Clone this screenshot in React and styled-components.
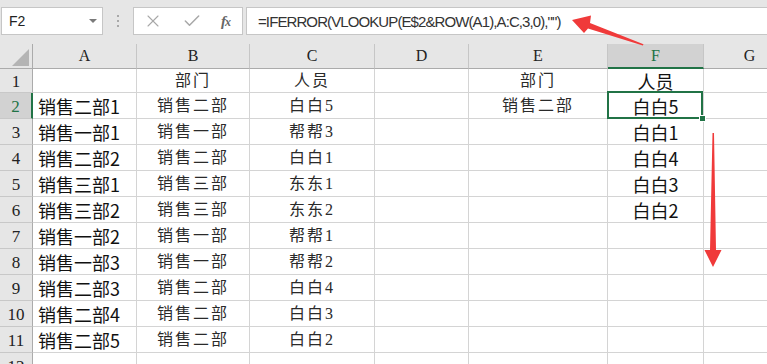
import React from 'react';
import styled, { createGlobalStyle } from 'styled-components';
import { X, Check } from 'lucide-react';

const Global = createGlobalStyle`
  html, body { margin: 0; padding: 0; background: #fff; overflow: hidden; }
  #root { width: 767px; height: 364px; }
`;

const Page = styled.div`
  position: relative;
  width: 767px;
  height: 364px;
  overflow: hidden;
  background: #fff;
  font-family: "Liberation Sans", "Noto Sans CJK SC", sans-serif;
`;

const Toolbar = styled.div`
  display: flex;
  align-items: flex-start;
  height: 44px;
  box-sizing: border-box;
  padding: 7px 0 0 1px;
  background: #e6e6e6;
`;

const Box = styled.div`
  box-sizing: border-box;
  height: 28px;
  background: #fff;
  border: 1px solid #c6c6c6;
  display: flex;
  align-items: center;
`;

const NameBox = styled(Box)`
  width: 102px;
  justify-content: space-between;
  padding: 0 5px 0 7px;
  font: 14px "Liberation Sans", sans-serif;
  color: #222;
`;

const Caret = styled.span`
  width: 0;
  height: 0;
  border-left: 4px solid transparent;
  border-right: 4px solid transparent;
  border-top: 4px solid #7a7a7a;
`;

const Grip = styled.div`
  width: 30px;
  height: 28px;
  display: flex;
  flex-direction: column;
  align-items: center;
  justify-content: center;
  gap: 3px;
`;

const Dot = styled.span`
  width: 2px;
  height: 2px;
  background: #a8a8a8;
`;

const ButtonBox = styled(Box)`
  width: 110px;
  justify-content: space-between;
  padding: 0 12px 0 9px;
  color: #a8a8a8;
`;

const Fx = styled.span`
  font: italic bold 15px "Liberation Serif", serif;
  color: #666;
  letter-spacing: -1px;
  & small { font-size: 12px; }
`;

const FormulaBox = styled(Box)`
  flex: 1;
  margin-left: 3px;
  border-right: none;
  padding-left: 11px;
  font: 15px "Liberation Sans", sans-serif;
  letter-spacing: -0.9px;
  color: #333;
  white-space: nowrap;
`;

const Sheet = styled.div`
  display: grid;
  grid-template-columns: 33px 104px 113px 125px 94px 139px 96px 92px;
  grid-template-rows: 25px 24px repeat(11, 26px);
`;

const Corner = styled.div`
  box-sizing: border-box;
  background: #e6e6e6;
  border-right: 1px solid #ababab;
  border-bottom: 1px solid #ababab;
  display: flex;
  align-items: flex-end;
  justify-content: flex-end;
  padding: 0 3px 2px 0;
`;

const Triangle = styled.span`
  width: 0;
  height: 0;
  border-left: 17px solid transparent;
  border-bottom: 17px solid #b4b4b4;
`;

const ColHead = styled.div`
  box-sizing: border-box;
  background: ${p => (p.$active ? '#d2d2d2' : '#e6e6e6')};
  border-right: 1px solid #c6c6c6;
  border-bottom: ${p => (p.$active ? '2px solid #217346' : '1px solid #ababab')};
  display: flex;
  align-items: center;
  justify-content: center;
  padding-top: ${p => (p.$active ? '1px' : '0')};
  font: 16px "Liberation Serif", serif;
  color: ${p => (p.$active ? '#217346' : '#222')};
`;

const RowHead = styled.div`
  box-sizing: border-box;
  background: ${p => (p.$active ? '#d2d2d2' : '#e6e6e6')};
  border-right: ${p => (p.$active ? '2px solid #217346' : '1px solid #ababab')};
  border-bottom: 1px solid #c8c8c8;
  display: flex;
  align-items: center;
  justify-content: center;
  padding-top: 2px;
  font: 17px "Liberation Serif", serif;
  color: ${p => (p.$active ? '#217346' : '#222')};
`;

const Cell = styled.div`
  position: relative;
  z-index: ${p => (p.$selected ? 2 : 0)};
  box-sizing: border-box;
  border-right: 1px solid #d4d4d4;
  border-bottom: 1px solid #d4d4d4;
  display: flex;
  align-items: center;
  justify-content: ${p => (p.$left ? 'flex-start' : 'center')};
  padding-left: ${p => (p.$left ? '5px' : '0')};
  white-space: nowrap;
  line-height: 1;
  font-family: ${p =>
    p.$sans
      ? '"Noto Sans CJK SC", sans-serif'
      : '"Liberation Serif", "Noto Sans CJK SC", serif'};
  font-size: ${p => (p.$sans ? '18px' : '16px')};
  letter-spacing: ${p => (p.$sans ? '0' : '2px')};
  color: ${p => (p.$sans ? '#111' : '#2a2a2a')};

  ${p =>
    p.$selected &&
    `
    &::after {
      content: '';
      position: absolute;
      top: -2px;
      left: -1px;
      right: 0;
      bottom: -1px;
      border: 2px solid #217346;
      pointer-events: none;
    }
    &::before {
      content: '';
      position: absolute;
      right: -3px;
      bottom: -4px;
      width: 5px;
      height: 5px;
      background: #217346;
      border: 1px solid #fff;
      z-index: 3;
    }
  `}
`;

const Overlay = styled.svg`
  position: absolute;
  top: 0;
  left: 0;
  pointer-events: none;
`;

const cols = ['A', 'B', 'C', 'D', 'E', 'F', 'G'];

const rows = [
  ['', '部门', '人员', '', '部门', '人员'],
  ['销售二部1', '销售二部', '白白5', '', '销售二部', '白白5'],
  ['销售一部1', '销售一部', '帮帮3', '', '', '白白1'],
  ['销售二部2', '销售二部', '白白1', '', '', '白白4'],
  ['销售三部1', '销售三部', '东东1', '', '', '白白3'],
  ['销售三部2', '销售三部', '东东2', '', '', '白白2'],
  ['销售一部2', '销售一部', '帮帮1', '', '', ''],
  ['销售一部3', '销售一部', '帮帮2', '', '', ''],
  ['销售二部3', '销售二部', '白白4', '', '', ''],
  ['销售二部4', '销售二部', '白白3', '', '', ''],
  ['销售二部5', '销售二部', '白白2', '', '', ''],
  ['', '', '', '', '', ''],
];

export default function App() {
  return (
    <Page>
      <Global />
      <Toolbar>
        <NameBox>
          <span>F2</span>
          <Caret />
        </NameBox>
        <Grip>
          <Dot />
          <Dot />
          <Dot />
        </Grip>
        <ButtonBox>
          <X size={20} strokeWidth={1.3} />
          <Check size={20} strokeWidth={1.8} />
          <Fx>
            f<small>x</small>
          </Fx>
        </ButtonBox>
        <FormulaBox>=IFERROR(VLOOKUP(E$2&amp;ROW(A1),A:C,3,0),"")</FormulaBox>
      </Toolbar>
      <Sheet>
        <Corner>
          <Triangle />
        </Corner>
        {cols.map(c => (
          <ColHead key={c} $active={c === 'F'}>
            {c}
          </ColHead>
        ))}
        {rows.map((r, i) => (
          <React.Fragment key={i}>
            <RowHead $active={i === 1}>{i + 1}</RowHead>
            {r.map((v, j) => (
              <Cell
                key={j}
                $left={j === 0}
                $sans={j === 0 || j === 5}
                $selected={i === 1 && j === 5}
              >
                {v}
              </Cell>
            ))}
            <Cell />
          </React.Fragment>
        ))}
      </Sheet>
      <Overlay width="767" height="364" viewBox="0 0 767 364">
        <polygon
          points="572,20 591,15.5 590,23 643.5,44.3 642.8,45.5 588,28.5 584,33"
          fill="#f03a3a"
        />
        <polygon
          points="712.5,133 714,133 716,250 721.5,250 713,267 704.5,250 710,250"
          fill="#f03a3a"
        />
      </Overlay>
    </Page>
  );
}
